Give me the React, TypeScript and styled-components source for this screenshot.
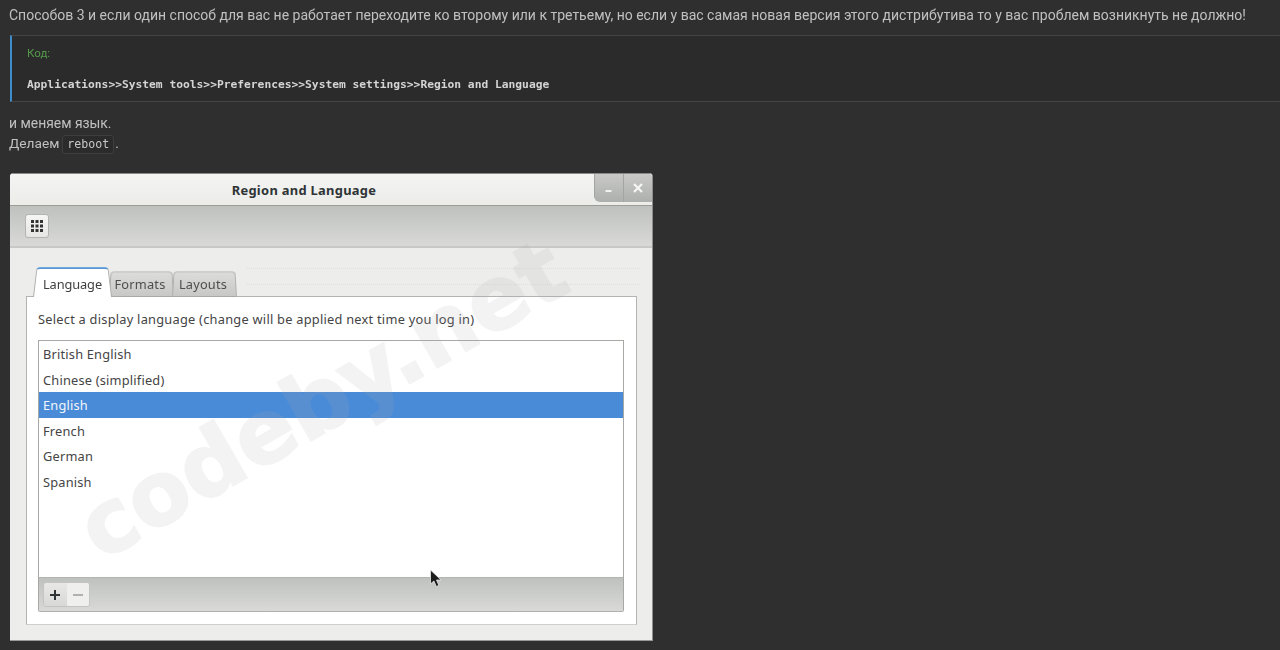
import React from "react";
import styled, { createGlobalStyle } from "styled-components";

const Global = createGlobalStyle`
  html, body { margin: 0; padding: 0; background: #2f2f2f; }
  body { overflow: hidden; }
`;

const Page = styled.div`
  width: 1280px;
  height: 650px;
  overflow: hidden;
  box-sizing: border-box;
  background: #2f2f2f;
  color: #c0c0c0;
  font-family: Roboto, "Liberation Sans", sans-serif;
  font-size: 14px;
  display: flex;
  flex-direction: column;
`;

const Paragraph = styled.div`
  padding-left: 9px;
  line-height: 20px;
  height: 20px;
  white-space: nowrap;
  filter: blur(0.3px);
`;

const IntroParagraph = styled(Paragraph)`
  margin-top: 5px;
`;

const FirstAfter = styled(Paragraph)`
  margin-top: 11px;
  font-size: 13.9px;
`;

const LastParagraph = styled(Paragraph)`
  font-size: 13.7px;
`;

const InlineCode = styled.code`
  display: inline-block;
  font-family: "DejaVu Sans Mono", monospace;
  font-size: 11.6px;
  line-height: 17px;
  color: #c8c8c8;
  background: #2b2b2b;
  border: 1px solid #3e3e3e;
  border-radius: 3px;
  padding: 0 4px;
  margin: 0 1px 0 3px;
`;

const Quote = styled.div`
  margin: 10px 0 0 10px;
  height: 67px;
  box-sizing: border-box;
  background: #2b2b2b;
  border-top: 1px solid #444;
  border-bottom: 1px solid #444;
  border-left: 2px solid #3f8ccb;
  padding-left: 15px;
  display: flex;
  flex-direction: column;
`;

const QuoteLabel = styled.div`
  margin-top: 9px;
  font-size: 11.5px;
  line-height: 16px;
  color: #559a4a;
  filter: blur(0.3px);
`;

const QuoteCode = styled.div`
  margin-top: 16px;
  font-family: "DejaVu Sans Mono", monospace;
  font-weight: 700;
  font-size: 11.28px;
  line-height: 16px;
  color: #d4d4d4;
  white-space: nowrap;
  filter: blur(0.3px);
`;

const Window = styled.div`
  position: relative;
  margin: 20px 0 0 10px;
  width: 643px;
  height: 468px;
  box-sizing: border-box;
  background: #ededeb;
  border-radius: 4px 4px 0 0;
  display: flex;
  flex-direction: column;
  overflow: hidden;
  font-family: "Noto Sans", "Open Sans", sans-serif;
  color: #3a3a3a;
  border-right: 1px solid #8e8e8e;
  border-bottom: 1px solid #9a9a9a;
  filter: blur(0.3px);
`;

const TitleBar = styled.div`
  position: relative;
  height: 33px;
  flex: none;
  box-sizing: border-box;
  background: linear-gradient(#f4f4f3, #ecece9);
  border-top: 1px solid #888;
  border-bottom: 1px solid #9c9c98;
  display: flex;
  align-items: center;
  justify-content: center;
`;

const Title = styled.div`
  font-size: 12.9px;
  font-weight: 700;
  letter-spacing: 0.3px;
  color: #2e3436;
  margin-right: 54px;
`;

const WindowButtons = styled.div`
  position: absolute;
  top: 0;
  right: 0;
  height: 28px;
  display: flex;
  border-radius: 0 0 0 6px;
  overflow: hidden;
`;

const WindowButton = styled.div`
  width: 28px;
  height: 28px;
  background: linear-gradient(#c9cac7, #adafac);
  border-left: 1px solid #a3a5a2;
  display: flex;
  align-items: center;
  justify-content: center;
`;

const Toolbar = styled.div`
  height: 42px;
  flex: none;
  box-sizing: border-box;
  background: linear-gradient(#bfc1be, #d9dad8);
  border-bottom: 2px solid #c8c8c6;
  display: flex;
  align-items: center;
  padding-left: 15px;
`;

const GridButton = styled.div`
  width: 24px;
  height: 24px;
  box-sizing: border-box;
  background: linear-gradient(#f6f6f5, #e6e6e4);
  border: 1px solid #b4b5b2;
  border-radius: 3px;
  display: flex;
  align-items: center;
  justify-content: center;
`;

const Body = styled.div`
  flex: 1;
  padding: 19px 15px 15px 16px;
  display: flex;
  flex-direction: column;
  min-height: 0;
`;

const Tabs = styled.div`
  display: flex;
  align-items: flex-end;
  height: 30px;
  flex: none;
  padding-left: 7px;
  margin-bottom: -1px;
  z-index: 1;
  position: relative;
`;

const Tab = styled.div<{ $active?: boolean }>`
  position: relative;
  box-sizing: border-box;
  flex: none;
  height: ${(p) => (p.$active ? "30px" : "27px")};
  width: ${(p) => (p.$active ? "79px" : "65px")};
  padding: ${(p) => (p.$active ? "7px 0 0 0" : "4px 3px 0 0")};
  margin-right: ${(p) => (p.$active ? "-3px" : "-2px")};
  text-align: center;
  font-size: 12.8px;
  letter-spacing: ${(p) => (p.$active ? "-0.1px" : "0.2px")};
  line-height: 20px;
  color: ${(p) => (p.$active ? "#3f3f3f" : "#4e4e4e")};
  white-space: nowrap;
  z-index: ${(p) => (p.$active ? 2 : 1)};
  &::before {
    content: "";
    position: absolute;
    inset: ${(p) => (p.$active ? "-3px 0 0 0" : "0")};
    z-index: -1;
    box-sizing: border-box;
    border-radius: 4px 4px 0 0;
    border: 1px solid #b0b0ad;
    border-bottom: ${(p) => (p.$active ? "none" : "1px solid #a8a8a5")};
    border-top: ${(p) => (p.$active ? "2px solid #4a90d9" : "1px solid #b0b0ad")};
    background: ${(p) => (p.$active ? "#ffffff" : "linear-gradient(#dcdcda, #c8c9c6)")};
    transform-origin: 50% 100%;
    transform: ${(p) => (p.$active ? "perspective(34px) rotateX(6deg)" : "perspective(36px) rotateX(4deg)")};
  }
`;

const TabStripDots = styled.div`
  flex: 1;
  align-self: flex-start;
  box-sizing: border-box;
  height: 17px;
  margin: 1px -3px 0 12px;
  border-top: 1px dotted #dededc;
  border-bottom: 1px dotted #dededc;
`;

const TabPanel = styled.div`
  flex: 1;
  min-height: 0;
  box-sizing: border-box;
  background: #fff;
  border: 1px solid #b3b3b0;
  border-bottom-color: #cfcfcc;
  padding: 12px 12px 12px 11px;
  display: flex;
  flex-direction: column;
`;

const Prompt = styled.div`
  font-size: 12.8px;
  letter-spacing: 0.25px;
  line-height: 20px;
  color: #444;
  white-space: nowrap;
`;

const ListFrame = styled.div`
  margin-top: 11px;
  flex: 1;
  min-height: 0;
  border: 1px solid #a8a8a5;
  border-bottom-color: #b0b0ad;
  border-radius: 0 0 2px 2px;
  display: flex;
  flex-direction: column;
`;

const List = styled.div`
  flex: 1;
  min-height: 0;
`;

const Row = styled.div<{ $selected?: boolean }>`
  height: 25.6px;
  line-height: 27.6px;
  padding-left: 4px;
  font-size: 12.8px;
  letter-spacing: 0.2px;
  background: ${(p) => (p.$selected ? "#4a8bd8" : "transparent")};
  color: ${(p) => (p.$selected ? "#f2f6fb" : "#444")};
`;

const ListToolbar = styled.div`
  height: 34px;
  flex: none;
  box-sizing: border-box;
  background: linear-gradient(#bfc1be, #d9dad8);
  border-top: 1px solid #b4b5b2;
  display: flex;
  align-items: center;
  padding-left: 4px;
`;

const ToolGroup = styled.div`
  display: flex;
  border: 1px solid #c4c5c2;
  border-radius: 3px;
  overflow: hidden;
`;

const ToolButton = styled.div<{ $disabled?: boolean }>`
  width: 22.5px;
  height: 23px;
  display: flex;
  align-items: center;
  justify-content: center;
  background: ${(p) => (p.$disabled ? "#efefed" : "linear-gradient(#e8e8e6, #d8d8d6)")};
`;

const Watermark = styled.div`
  position: absolute;
  left: 98px;
  top: 313px;
  font-family: "DejaVu Sans", sans-serif;
  font-weight: 700;
  font-size: 88px;
  line-height: 88px;
  color: #aaa;
  -webkit-text-stroke: 2px #aaa;
  opacity: 0.14;
  transform: rotate(-30deg);
  transform-origin: 0 100%;
  white-space: nowrap;
  pointer-events: none;
  z-index: 3;
`;

const Cursor = styled.svg`
  position: absolute;
  left: 419px;
  top: 396px;
  z-index: 4;
`;

const languages = ["British English", "Chinese (simplified)", "English", "French", "German", "Spanish"];

export default function App() {
  return (
    <Page>
      <Global />
      <IntroParagraph>
        Способов 3 и если один способ для вас не работает переходите ко второму или к третьему, но если у вас самая новая версия этого дистрибутива то у вас проблем возникнуть не должно!
      </IntroParagraph>
      <Quote>
        <QuoteLabel>Код:</QuoteLabel>
        <QuoteCode>Applications&gt;&gt;System tools&gt;&gt;Preferences&gt;&gt;System settings&gt;&gt;Region and Language</QuoteCode>
      </Quote>
      <FirstAfter>и меняем язык.</FirstAfter>
      <LastParagraph>
        Делаем<InlineCode>reboot</InlineCode>.
      </LastParagraph>
      <Window>
        <TitleBar>
          <Title>Region and Language</Title>
          <WindowButtons>
            <WindowButton>
              <svg width="10" height="10" viewBox="0 0 10 10"><rect x="1.5" y="7" width="6" height="2" fill="#f2f2f2" /></svg>
            </WindowButton>
            <WindowButton>
              <svg width="12" height="12" viewBox="0 0 12 12"><path d="M2 2l8 8M10 2l-8 8" stroke="#f6f6f6" strokeWidth="2.2" /></svg>
            </WindowButton>
          </WindowButtons>
        </TitleBar>
        <Toolbar>
          <GridButton>
            <svg width="14" height="14" viewBox="0 0 14 14" fill="#333">
              {[1, 5.5, 10].flatMap((y) => [1, 5.5, 10].map((x) => <rect key={`${x}-${y}`} x={x} y={y} width="3" height="3" />))}
            </svg>
          </GridButton>
        </Toolbar>
        <Body>
          <Tabs>
            <Tab $active>Language</Tab>
            <Tab>Formats</Tab>
            <Tab>Layouts</Tab>
            <TabStripDots />
          </Tabs>
          <TabPanel>
            <Prompt>Select a display language (change will be applied next time you log in)</Prompt>
            <ListFrame>
              <List>
                {languages.map((l) => (
                  <Row key={l} $selected={l === "English"}>{l}</Row>
                ))}
              </List>
              <ListToolbar>
                <ToolGroup>
                  <ToolButton>
                    <svg width="12" height="12" viewBox="0 0 12 12"><path d="M6 1v10M1 6h10" stroke="#2e3436" strokeWidth="2" /></svg>
                  </ToolButton>
                  <ToolButton $disabled>
                    <svg width="12" height="12" viewBox="0 0 12 12"><path d="M1 6h10" stroke="#b0b0ae" strokeWidth="2" /></svg>
                  </ToolButton>
                </ToolGroup>
              </ListToolbar>
            </ListFrame>
          </TabPanel>
        </Body>
        <Watermark>codeby.net</Watermark>
        <Cursor width="14" height="20" viewBox="0 0 14 20">
          <path d="M1.5 1v14l3.4-3 2.4 5.5 2.6-1.1-2.4-5.4h4.6z" fill="#1c1c1c" stroke="#e8e8e8" strokeWidth="0.8" />
        </Cursor>
      </Window>
    </Page>
  );
}
